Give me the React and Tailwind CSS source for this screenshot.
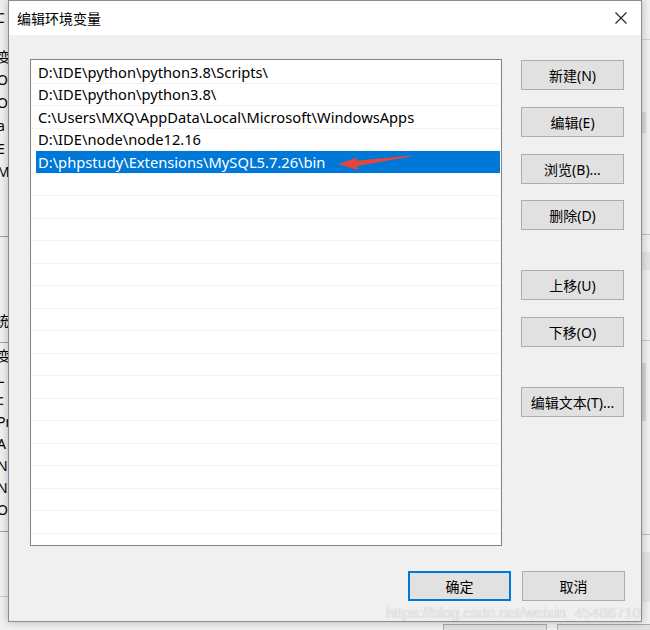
import React from "react";

const ui = { fontFamily: '"Noto Sans", "Noto Sans CJK SC", sans-serif' };

const entries = [
  "D:\\IDE\\python\\python3.8\\Scripts\\",
  "D:\\IDE\\python\\python3.8\\",
  "C:\\Users\\MXQ\\AppData\\Local\\Microsoft\\WindowsApps",
  "D:\\IDE\\node\\node12.16",
  "D:\\phpstudy\\Extensions\\MySQL5.7.26\\bin",
];

function Btn({ children, className = "", primary = false }) {
  return (
    <div
      className={
        "flex h-[30px] w-[103px] items-center justify-center bg-[#e1e1e1] text-[14px] text-black " +
        (primary ? "border-2 border-[#0078d7] " : "border border-[#adadad] ") +
        className
      }
    >
      {children}
    </div>
  );
}

function BgWindow() {
  const top = ["变", "Or", "Or", "a", "E", "M"];
  const bottom = ["变", "L", "c", "Pr", "A", "NC", "NU", "OS"];
  return (
    <div className="absolute inset-0 bg-[#f0f0f0] text-[14px] text-black" style={ui}>
      {/* left strip content */}
      <div className="flex w-[8px] flex-col overflow-hidden">
        <div className="h-[35px] leading-[35px] -ml-[4px]">C</div>
        <div className="h-[10px]" />
        <div className="flex flex-col -ml-[3px]">
          {top.map((t, i) => (
            <div key={i} className="h-[23px] leading-[23px] whitespace-nowrap">{t}</div>
          ))}
        </div>
        <div className="mt-[53px] h-px w-full bg-[#a0a0a0]" />
        <div className="h-[106px] border-b border-[#a0a0a0] flex flex-col justify-end">
          <div className="h-[23px] mb-[10px] leading-[23px] -ml-[5px] whitespace-nowrap">统</div>
        </div>
        <div className="flex flex-col -ml-[3px] pt-[2px]">
          {bottom.map((t, i) => (
            <div key={i} className="h-[22px] leading-[22px] whitespace-nowrap">{t}</div>
          ))}
        </div>
        <div className="mt-[10px] h-px w-full bg-[#a0a0a0]" />
        <div className="mt-[64px] h-px w-full bg-[#c8c8c8]" />
      </div>
      {/* right strip */}
      <div className="absolute right-0 top-0 flex h-full w-[8px] flex-col">
        <div className="h-[40px] border-b border-[#cfcfcf]" />
        <div className="mt-[72px] h-[21px] w-[4px] bg-[#dadada]" />
        <div className="mt-[101px] h-px bg-[#c0c0c0]" />
        <div className="mt-[17px] h-[18px] bg-[#e2e2e2]" />
        <div className="mt-[70px] h-px bg-[#c8c8c8]" />
        <div className="mt-[22px] h-[58px] w-[4px] bg-[#d6d6d6]" />
        <div className="mt-[113px] h-px bg-[#c0c0c0]" />
        <div className="mt-[17px] h-[50px] bg-[#e2e2e2]" />
      </div>
      {/* bottom buttons of background window */}
      <div className="absolute left-[443px] top-[624px] h-[20px] w-[104px] border border-[#adadad] bg-[#e1e1e1]" />
      <div className="absolute left-[557px] top-[624px] h-[20px] w-[104px] border border-[#adadad] bg-[#e1e1e1]" />
    </div>
  );
}

export default function App() {
  const rows = Array.from({ length: 22 }, (_, i) => entries[i] ?? "");
  return (
    <div className="relative h-[630px] w-[650px] overflow-hidden bg-[#f0f0f0]" style={ui}>
      <BgWindow />
      {/* dialog */}
      <div className="absolute left-[8px] top-0 flex h-[622px] w-[634px] flex-col border border-[#8c8c8c] bg-[#f0f0f0] shadow-[0_0_8px_rgba(0,0,0,0.25)]">
        <div className="flex h-[34px] shrink-0 items-center justify-between bg-white pl-[8px] pr-[7px]">
          <span className="text-[14px] text-black" style={{ fontFamily: '"Noto Sans CJK SC", sans-serif' }}>编辑环境变量</span>
          <svg width="14" height="14" viewBox="0 0 14 14" className="mr-[6px]">
            <path d="M1.5 1.5 L12.5 12.5 M12.5 1.5 L1.5 12.5" stroke="#222" strokeWidth="1.1" fill="none" />
          </svg>
        </div>
        <div className="flex flex-1 flex-col">
          <div className="flex gap-[19px] pl-[21px] pt-[24px]">
            <div className="relative h-[487px] w-[472px] overflow-hidden border border-[#828282] bg-white">
              <div className="flex flex-col pt-[1px]">
                {rows.map((t, i) => (
                  <div key={i} className="h-[22.5px] border-b border-[#f3f3f3] pl-[5px] pr-[1px]">
                    <div
                      className={
                        "flex h-full items-center whitespace-nowrap px-[2px] text-[14.7px] " +
                        (i === 4 ? "bg-[#0078d7] text-white" : "text-black")
                      }
                    >
                      {t}
                    </div>
                  </div>
                ))}
              </div>
              <svg className="absolute left-0 top-0" width="472" height="487" viewBox="30 59 472 487">
                <polygon
                  points="337,163 356,156.5 355.5,159.8 410,154.6 410,155.6 356,165 357,169"
                  fill="#e5453b"
                />
              </svg>
            </div>
            <div className="flex flex-col pt-[1px]" style={ui}>
              <Btn>新建(N)</Btn>
              <Btn className="mt-[17px]">编辑(E)</Btn>
              <Btn className="mt-[17px]">浏览(B)...</Btn>
              <Btn className="mt-[16px]">删除(D)</Btn>
              <Btn className="mt-[40px]">上移(U)</Btn>
              <Btn className="mt-[17px]">下移(O)</Btn>
              <Btn className="mt-[40px]">编辑文本(T)...</Btn>
            </div>
          </div>
          <div className="flex justify-end gap-[11px] pr-[16px] pt-[25px]">
            <Btn primary>确定</Btn>
            <Btn>取消</Btn>
          </div>
        </div>
      </div>
      {/* watermark */}
      <div
        className="absolute left-[386px] top-[602px] whitespace-nowrap text-[15px] text-white/80 [text-shadow:0_0_1px_rgba(0,0,0,0.35)]"
        style={{ fontFamily: '"Liberation Sans", sans-serif' }}
      >
        https://blog.csdn.net/weixin_45486710
      </div>
    </div>
  );
}
